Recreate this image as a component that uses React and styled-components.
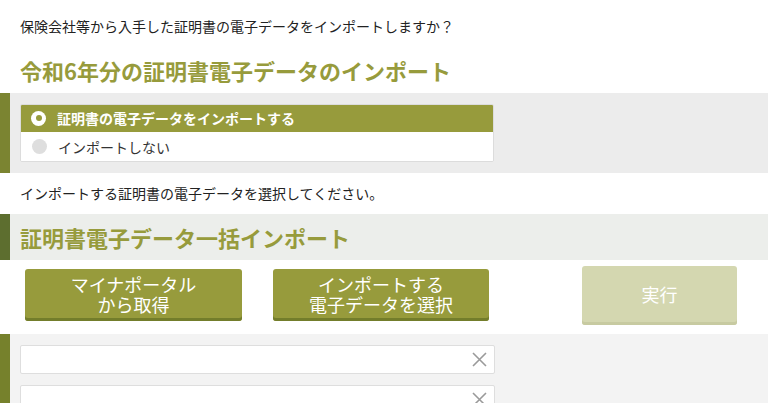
import React from "react";
import styled, { createGlobalStyle } from "styled-components";

const Global = createGlobalStyle`
  html, body { margin: 0; padding: 0; background: #fff; }
  body {
    font-family: "Noto Sans CJK JP", "Noto Sans", sans-serif;
    color: #222;
    width: 768px;
    overflow: hidden;
  }
  * { box-sizing: border-box; }
`;

const GREEN = "#979b3c";

const Page = styled.div`
  display: flex;
  flex-direction: column;
`;

const Lead = styled.p`
  margin: ${(p) => p.$mt || 0}px 0 ${(p) => p.$mb || 0}px 20px;
  font-size: 14px;
  line-height: 20px;
  color: #222;
`;

const PageTitle = styled.h2`
  margin: 20px 0 9px 20px;
  font-size: 22px;
  line-height: 28px;
  font-weight: 700;
  color: ${GREEN};
`;

const Band = styled.section`
  background: ${(p) => p.$bg};
  border-left: 10px solid ${(p) => p.$bar};
  padding: ${(p) => p.$pad};
  display: flex;
  flex-direction: column;
  gap: ${(p) => p.$gap || 0}px;
`;

const SectionTitle = styled.h3`
  margin: 0;
  font-size: 22px;
  line-height: 46px;
  font-weight: 700;
  color: ${GREEN};
`;

const RadioBox = styled.div`
  width: 474px;
  border-radius: 2px;
  overflow: hidden;
  background: #fff;
  border: 1px solid #dcdcdc;
  display: flex;
  flex-direction: column;
`;

const RadioRow = styled.label`
  display: flex;
  align-items: center;
  gap: 11px;
  height: ${(p) => (p.$on ? 28 : 29)}px;
  padding-left: 11px;
  background: ${(p) => (p.$on ? GREEN : "#fff")};
  color: ${(p) => (p.$on ? "#fff" : "#333")};
  font-size: 14px;
  font-weight: ${(p) => (p.$on ? 700 : 400)};
  margin: ${(p) => (p.$on ? "-1px -1px 0" : "0")};
`;

const Dot = styled.span`
  width: 15px;
  height: 15px;
  border-radius: 50%;
  background: ${(p) => (p.$on ? "#fff" : "#dedede")};
  display: flex;
  align-items: center;
  justify-content: center;
  &::after {
    content: "";
    display: ${(p) => (p.$on ? "block" : "none")};
    width: 6px;
    height: 6px;
    border-radius: 50%;
    background: ${GREEN};
  }
`;

const ButtonRow = styled.div`
  height: 74px;
  padding-bottom: 4px;
  display: flex;
  align-items: center;
`;

const ActionButton = styled.button`
  width: ${(p) => p.$w}px;
  height: ${(p) => p.$h}px;
  margin-left: ${(p) => p.$ml}px;
  border: none;
  border-radius: 3px;
  background: ${(p) => (p.$disabled ? "#d4d7b0" : GREEN)};
  box-shadow: inset 0 -3px 0 ${(p) => (p.$disabled ? "#c7caa1" : "#737d2b")};
  color: #fff;
  font-family: inherit;
  font-size: 18px;
  line-height: 20px;
  padding: 0 0 3px;
  text-align: center;
`;

const InputBox = styled.div`
  width: 475px;
  height: 29px;
  background: #fff;
  border: 1px solid #dedede;
  border-radius: 2px;
  display: flex;
  align-items: center;
  justify-content: flex-end;
  padding-right: 7px;
`;

const ClearIcon = () => (
  <svg width="15" height="15" viewBox="0 0 15 15">
    <path d="M1 1 L14 14 M14 1 L1 14" stroke="#9a9a9a" strokeWidth="1.6" fill="none" />
  </svg>
);

export default function App() {
  return (
    <Page>
      <Global />
      <Lead $mt={16}>保険会社等から入手した証明書の電子データをインポートしますか？</Lead>
      <PageTitle>令和6年分の証明書電子データのインポート</PageTitle>
      <Band $bg="#ececec" $bar="#7b8431" $pad="11px 0 11px 10px">
        <RadioBox>
          <RadioRow $on>
            <Dot $on />
            証明書の電子データをインポートする
          </RadioRow>
          <RadioRow>
            <Dot />
            インポートしない
          </RadioRow>
        </RadioBox>
      </Band>
      <Lead $mt={10} $mb={11}>インポートする証明書の電子データを選択してください。</Lead>
      <Band $bg="#eceeeb" $bar="#5d6e2f" $pad="0 0 0 10px">
        <SectionTitle>証明書電子データ一括インポート</SectionTitle>
      </Band>
      <ButtonRow>
        <ActionButton $w={217} $h={52} $ml={25}>
          マイナポータル<br />から取得
        </ActionButton>
        <ActionButton $w={216} $h={52} $ml={31}>
          インポートする<br />電子データを選択
        </ActionButton>
        <ActionButton $w={155} $h={59} $ml={93} $disabled>
          実行
        </ActionButton>
      </ButtonRow>
      <Band $bg="#f3f3f3" $bar="#76812c" $pad="11px 0 11px 10px" $gap={11}>
        <InputBox>
          <ClearIcon />
        </InputBox>
        <InputBox>
          <ClearIcon />
        </InputBox>
      </Band>
    </Page>
  );
}
